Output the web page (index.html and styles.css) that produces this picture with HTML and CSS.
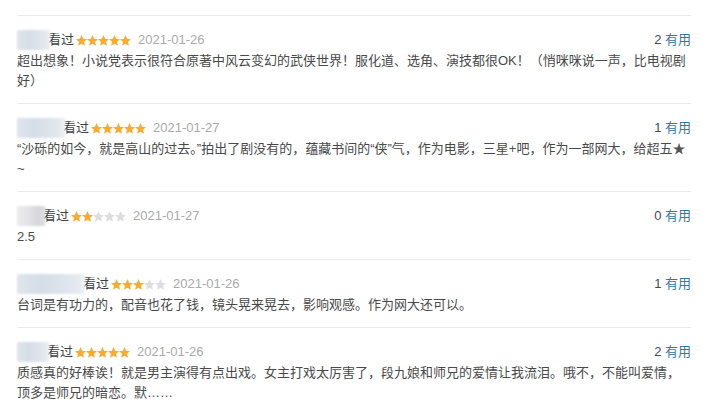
FILE: index.html
```html
<!DOCTYPE html>
<html lang="zh-CN">
<head>
  <meta charset="UTF-8" />
  <meta name="viewport" content="width=device-width, initial-scale=1.0"/>
  <title>短评</title>
  <link rel="stylesheet" href="styles.css">
</head>
<body>
  <svg class="defs" width="0" height="0">
    <symbol id="star" viewBox="0 0 11 11">
      <polygon points="5.5,0.1 7.09,3.82 10.95,4.21 8.07,6.83 8.91,10.69 5.5,8.7 2.09,10.69 2.93,6.83 0.05,4.21 3.91,3.82"/>
    </symbol>
  </svg>

  <div class="comments">
    <div class="comment-item">
      <div class="comment-info">
        <div class="who">
          <span class="name-blur" style="width: 33px"></span>
          <span>看过</span>
          <svg class="rating" width="55" height="11">
            <use href="#star" x="0" width="11" height="11" class="on"/>
            <use href="#star" x="11" width="11" height="11" class="on"/>
            <use href="#star" x="22" width="11" height="11" class="on"/>
            <use href="#star" x="33" width="11" height="11" class="on"/>
            <use href="#star" x="44" width="11" height="11" class="on"/>
          </svg>
          <span class="comment-time">2021-01-26</span>
        </div>
        <div class="votes"><span class="vote-count">2</span> <a href="#">有用</a></div>
      </div>
      <p class="short">超出想象！小说党表示很符合原著中风云变幻的武侠世界！服化道、选角、演技都很OK！（悄咪咪说一声，比电视剧好）</p>
    </div>

    <div class="comment-item">
      <div class="comment-info">
        <div class="who">
          <span class="name-blur" style="width: 48px"></span>
          <span>看过</span>
          <svg class="rating" width="55" height="11">
            <use href="#star" x="0" width="11" height="11" class="on"/>
            <use href="#star" x="11" width="11" height="11" class="on"/>
            <use href="#star" x="22" width="11" height="11" class="on"/>
            <use href="#star" x="33" width="11" height="11" class="on"/>
            <use href="#star" x="44" width="11" height="11" class="on"/>
          </svg>
          <span class="comment-time">2021-01-27</span>
        </div>
        <div class="votes"><span class="vote-count">1</span> <a href="#">有用</a></div>
      </div>
      <p class="short">“沙砾的如今，就是高山的过去。”拍出了剧没有的，蕴藏书间的“侠”气，作为电影，三星+吧，作为一部网大，给超五<span class="glyph">★</span>~</p>
    </div>

    <div class="comment-item">
      <div class="comment-info">
        <div class="who">
          <span class="name-blur grey" style="width: 28px"></span>
          <span>看过</span>
          <svg class="rating" width="55" height="11">
            <use href="#star" x="0" width="11" height="11" class="on"/>
            <use href="#star" x="11" width="11" height="11" class="on"/>
            <use href="#star" x="22" width="11" height="11" class="off"/>
            <use href="#star" x="33" width="11" height="11" class="off"/>
            <use href="#star" x="44" width="11" height="11" class="off"/>
          </svg>
          <span class="comment-time">2021-01-27</span>
        </div>
        <div class="votes"><span class="vote-count">0</span> <a href="#">有用</a></div>
      </div>
      <p class="short">2.5</p>
    </div>

    <div class="comment-item">
      <div class="comment-info">
        <div class="who">
          <span class="name-blur" style="width: 68px"></span>
          <span>看过</span>
          <svg class="rating" width="55" height="11">
            <use href="#star" x="0" width="11" height="11" class="on"/>
            <use href="#star" x="11" width="11" height="11" class="on"/>
            <use href="#star" x="22" width="11" height="11" class="on"/>
            <use href="#star" x="33" width="11" height="11" class="off"/>
            <use href="#star" x="44" width="11" height="11" class="off"/>
          </svg>
          <span class="comment-time">2021-01-26</span>
        </div>
        <div class="votes"><span class="vote-count">1</span> <a href="#">有用</a></div>
      </div>
      <p class="short">台词是有功力的，配音也花了钱，镜头晃来晃去，影响观感。作为网大还可以。</p>
    </div>

    <div class="comment-item">
      <div class="comment-info">
        <div class="who">
          <span class="name-blur" style="width: 32px"></span>
          <span>看过</span>
          <svg class="rating" width="55" height="11">
            <use href="#star" x="0" width="11" height="11" class="on"/>
            <use href="#star" x="11" width="11" height="11" class="on"/>
            <use href="#star" x="22" width="11" height="11" class="on"/>
            <use href="#star" x="33" width="11" height="11" class="on"/>
            <use href="#star" x="44" width="11" height="11" class="on"/>
          </svg>
          <span class="comment-time">2021-01-26</span>
        </div>
        <div class="votes"><span class="vote-count">2</span> <a href="#">有用</a></div>
      </div>
      <p class="short">质感真的好棒诶！就是男主演得有点出戏。女主打戏太厉害了，段九娘和师兄的爱情让我流泪。哦不，不能叫爱情，顶多是师兄的暗恋。默……</p>
    </div>
  </div>
</body>
</html>
```

FILE: styles.css
```css
body {
  margin: 0;
  background: #fff;
  color: #494949;
  font-family: "Liberation Sans", "Noto Sans CJK SC", sans-serif;
  font-size: 13px;
}

.defs {
  position: absolute;
  width: 0;
  height: 0;
}

.comments {
  padding: 15px 25px 0 17px;
}

.comment-item {
  border-top: 1px solid #ececec;
  padding: 14px 0 12px;
}

.comment-info {
  display: flex;
  justify-content: space-between;
  line-height: 20px;
  height: 20px;
}

.who {
  display: flex;
  align-items: center;
  color: #3f3f3f;
}

.name-blur {
  position: relative;
  z-index: 1;
  height: 20px;
  margin-right: -2px;
  background: linear-gradient(90deg, #dfe5ec 0%, #d5dde6 35%, #dbe2ea 60%, #e3e8ee 85%, #eef1f4 100%);
  filter: blur(0.8px);
}

.name-blur.grey {
  background: linear-gradient(90deg, #ebebee 0%, #e4e4e8 40%, #d8d8dc 70%, #dcdcdf 100%);
}

.rating {
  margin: 0 7px 0 2px;
}

.rating .on {
  fill: #fbaa2a;
}

.rating .off {
  fill: #dedede;
}

.comment-time {
  color: #aaa;
}

.votes {
  color: #494949;
}

.votes a {
  color: #37a;
  text-decoration: none;
}

.short {
  margin: 1px 0 0;
  line-height: 20px;
  word-break: break-all;
}

.glyph {
  color: #555;
}
```
